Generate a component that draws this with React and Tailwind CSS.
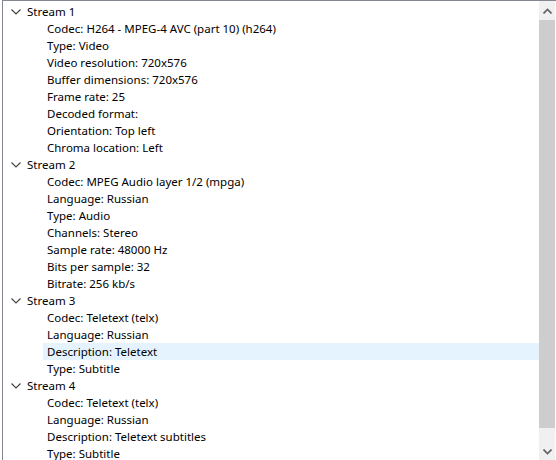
import React from 'react';

const streams = [
  {
    name: 'Stream 1',
    items: [
      'Codec: H264 - MPEG-4 AVC (part 10) (h264)',
      'Type: Video',
      'Video resolution: 720x576',
      'Buffer dimensions: 720x576',
      'Frame rate: 25',
      'Decoded format:',
      'Orientation: Top left',
      'Chroma location: Left',
    ],
  },
  {
    name: 'Stream 2',
    items: [
      'Codec: MPEG Audio layer 1/2 (mpga)',
      'Language: Russian',
      'Type: Audio',
      'Channels: Stereo',
      'Sample rate: 48000 Hz',
      'Bits per sample: 32',
      'Bitrate: 256 kb/s',
    ],
  },
  {
    name: 'Stream 3',
    items: ['Codec: Teletext (telx)', 'Language: Russian', 'Description: Teletext', 'Type: Subtitle'],
  },
  {
    name: 'Stream 4',
    items: ['Codec: Teletext (telx)', 'Language: Russian', 'Description: Teletext subtitles', 'Type: Subtitle'],
  },
];

const Chevron = ({ up }) => (
  <svg width="9" height="6" viewBox="0 0 9 6">
    <path d={up ? 'M0.5 5.5 L4.5 1.5 L8.5 5.5' : 'M0.5 0.5 L4.5 4.5 L8.5 0.5'} fill="none" stroke="#606060" strokeWidth="1.6" />
  </svg>
);

const Expander = () => (
  <svg width="10" height="6" viewBox="0 0 10 6">
    <path d="M0.5 0.5 L5 5 L9.5 0.5" fill="none" stroke="#404040" strokeWidth="1.1" />
  </svg>
);

export default function App() {
  return (
    <div className="w-[556px] h-[460px] bg-white overflow-hidden pl-[2px]" style={{ fontFamily: '"Noto Sans", sans-serif' }}>
      <div className="flex h-[460px] border-l border-t border-[#828790]">
        <div className="w-[536px] shrink-0 h-[459px] overflow-hidden pt-[2px] text-[11.5px] text-black">
          {streams.map((s) => (
            <div key={s.name}>
              <div className="flex items-center h-[17px]">
                <span className="w-[24px] flex justify-center pl-[2px]"><Expander /></span>
                <span className="leading-[17px]">{s.name}</span>
              </div>
              {s.items.map((it) => (
                <div key={it} className={`h-[17px] ml-[40px] pl-[4px] leading-[17px] whitespace-nowrap ${it === 'Description: Teletext' ? 'bg-[#e5f3ff]' : ''}`}>
                  {it}
                </div>
              ))}
            </div>
          ))}
        </div>
        <div className="w-[16px] shrink-0 h-[459px] bg-[#f0f0f0] flex flex-col">
          <div className="h-[19px] shrink-0 flex items-center justify-center"><Chevron up /></div>
          <div className="h-[408px] shrink-0 bg-[#cdcdcd]"></div>
          <div className="flex-1 flex items-end justify-center pb-[5px]"><Chevron /></div>
        </div>
      </div>
    </div>
  );
}
